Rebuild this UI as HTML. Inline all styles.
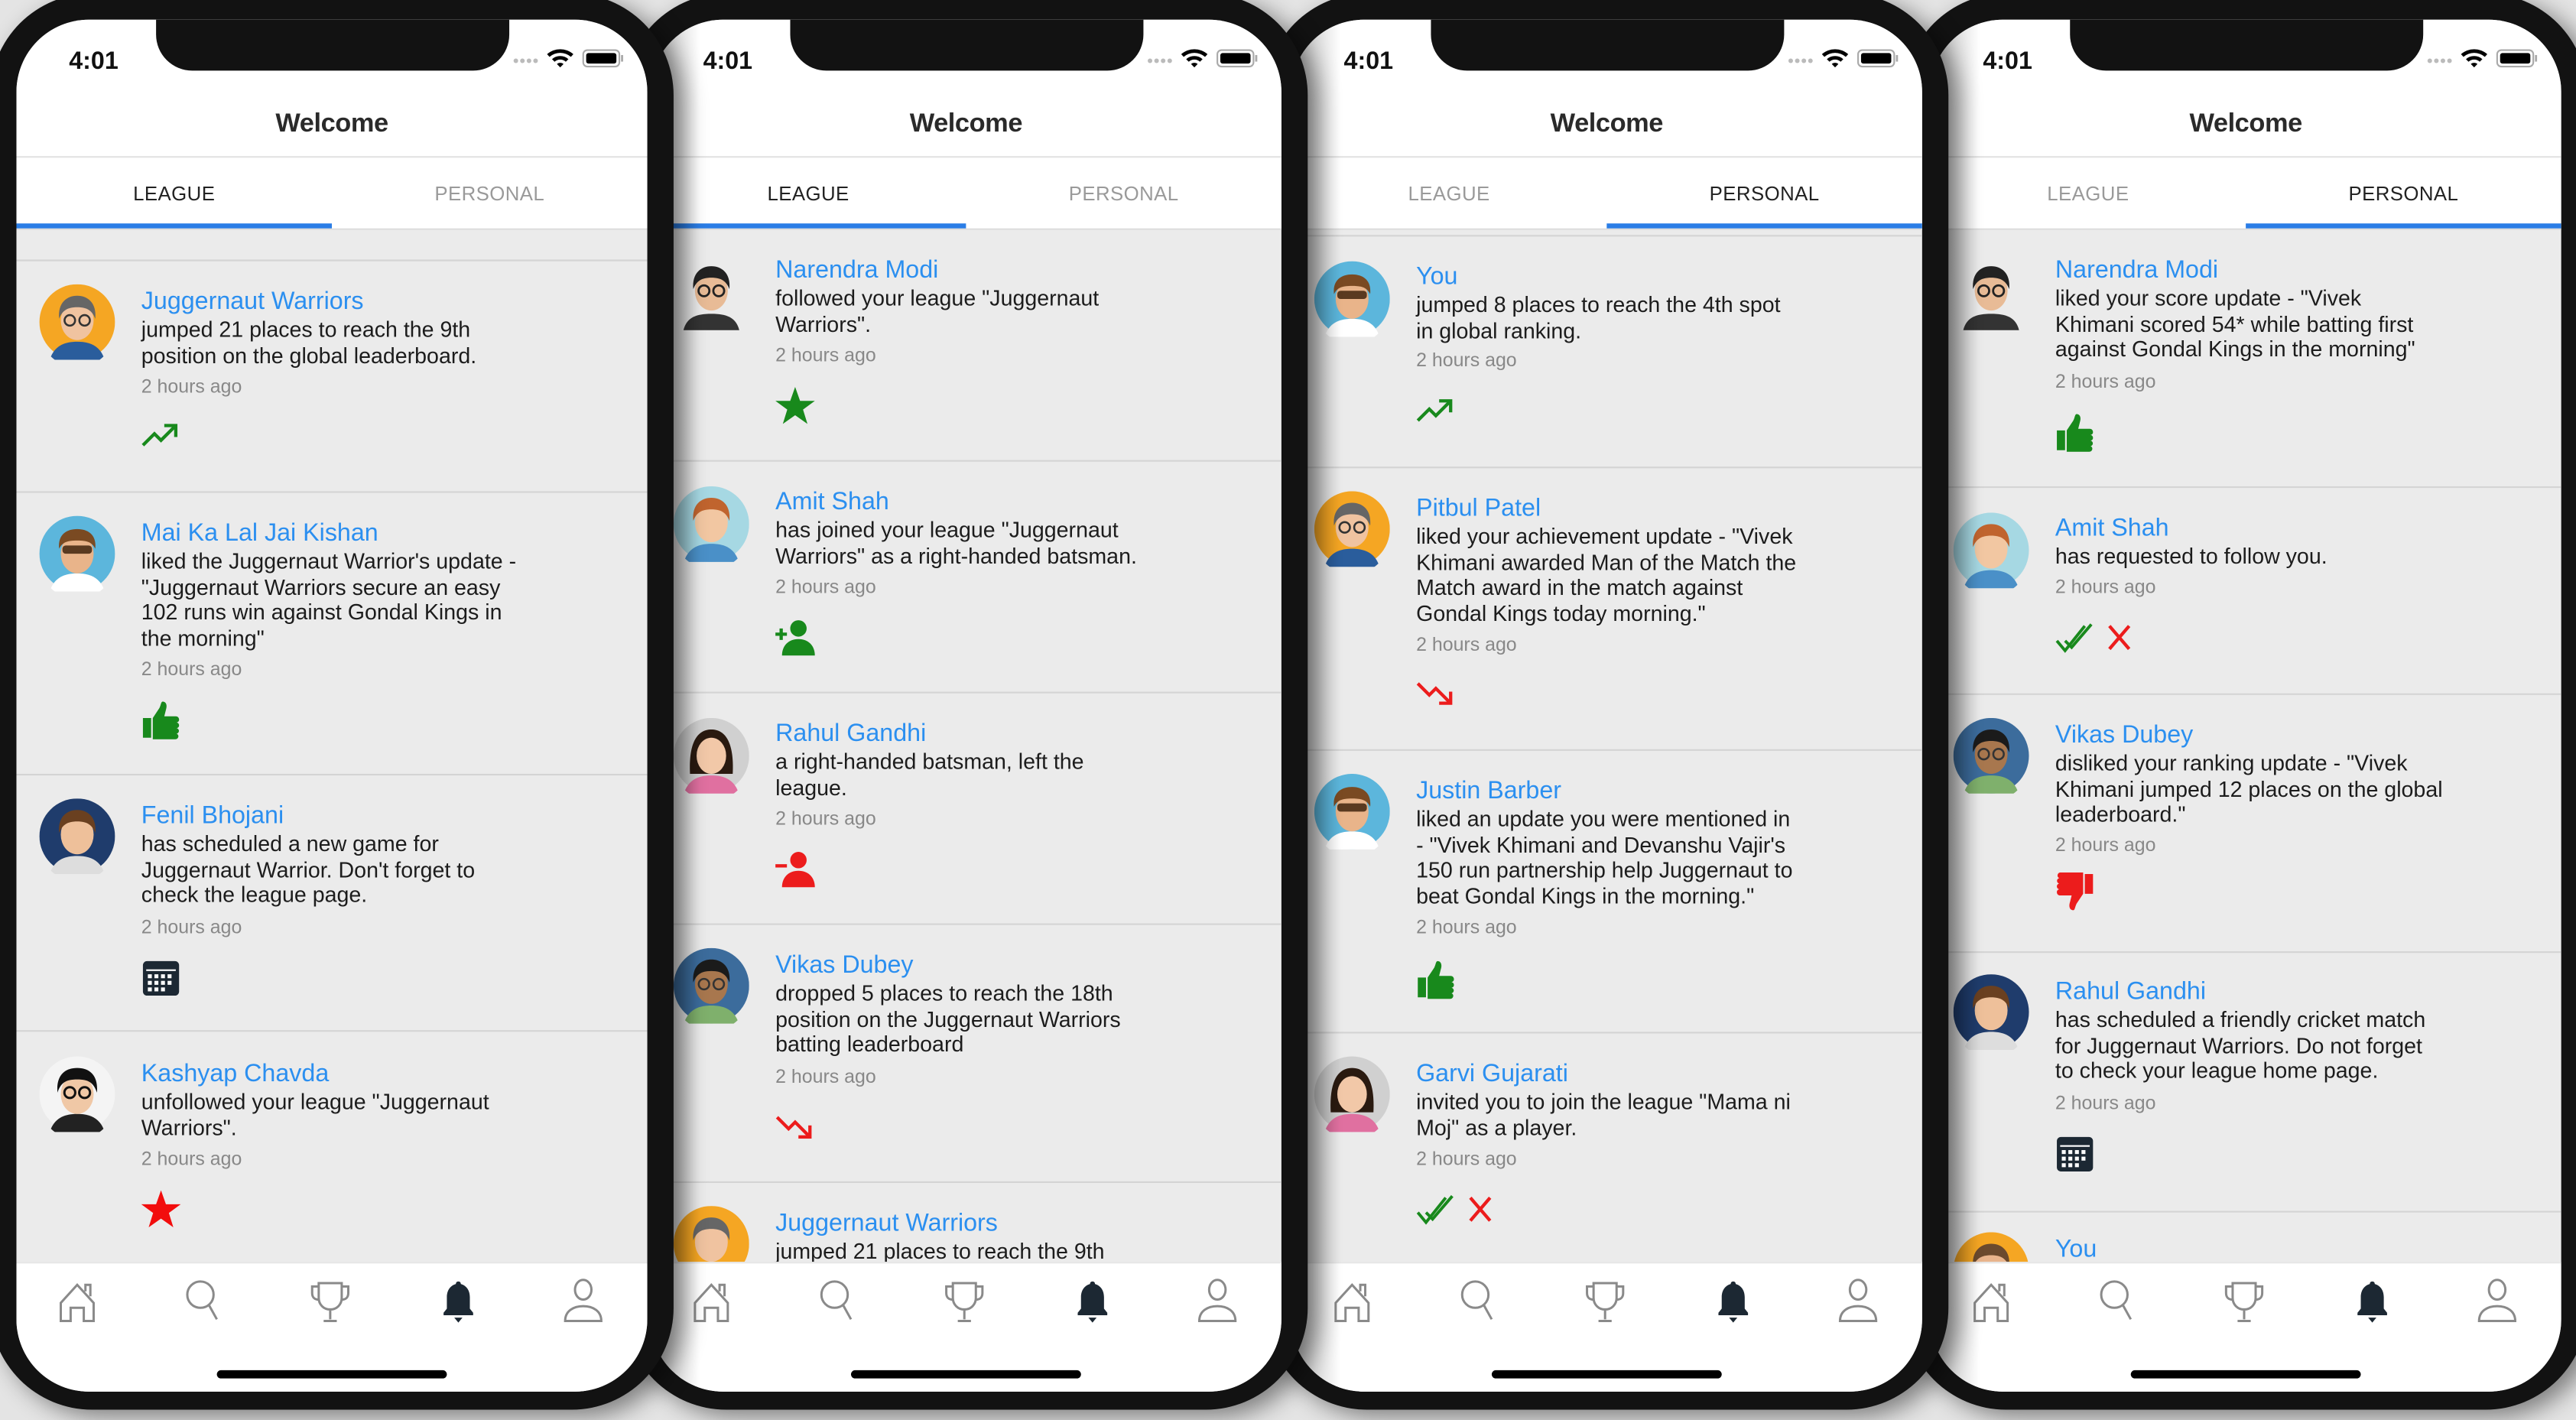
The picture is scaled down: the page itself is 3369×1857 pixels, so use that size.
<!DOCTYPE html>
<html><head><meta charset="utf-8">
<style>
html,body{margin:0;padding:0;}
body{width:3369px;height:1857px;overflow:hidden;background:#e4e4e4;font-family:"Liberation Sans",Arial,sans-serif;}
#w{position:absolute;left:0;top:0;width:1568px;height:864px;transform:scale(2.14860);transform-origin:0 0;}
.ph{position:absolute;top:-4px;width:416px;height:862px;background:#121212;border-radius:62px;box-shadow:6px 4px 14px rgba(0,0,0,.45);}
.sc{position:absolute;left:16px;top:16px;width:384px;height:835px;border-radius:44px;overflow:hidden;background:#ebebeb;}
.in{position:absolute;left:0;top:-12px;width:384px;height:864px;}
.hd{position:absolute;left:0;top:0;width:384px;height:140px;background:#fff;}
.notch{position:absolute;left:85px;top:0;width:215px;height:43px;background:#121212;border-radius:0 0 22px 22px;}
.time{position:absolute;left:32px;top:29px;font-size:15px;font-weight:bold;color:#111;}
.welc{position:absolute;left:0;width:384px;top:67px;text-align:center;font-size:16px;font-weight:bold;color:#2a2a2a;letter-spacing:-0.2px;}
.hl{position:absolute;left:0;top:95px;width:384px;height:1px;background:#e3e3e3;}
.tab{position:absolute;top:111px;width:192px;text-align:center;font-size:12px;color:#9a9a9a;letter-spacing:0.2px;}
.tab.a{color:#222;}
.ul{position:absolute;top:136px;width:192px;height:2.5px;background:#2a7de6;}
.tl{position:absolute;left:0;top:139px;width:384px;height:1px;background:#dcdcdc;}
.dv{position:absolute;left:0;width:384px;height:1px;background:#d4d4d4;}
.n{position:absolute;left:76px;font-size:15px;color:#2b8ff0;line-height:18px;white-space:nowrap;margin-top:2px;}
.b{position:absolute;left:76px;font-size:13.3px;color:#1c1c1c;line-height:15.7px;white-space:nowrap;margin-top:2px;}
.t{position:absolute;left:76px;font-size:11.6px;color:#888;line-height:14px;margin-top:2px;}
.av{position:absolute;left:14px;width:46px;height:46px;}
.ic{position:absolute;left:75px;}
.tb{position:absolute;left:0;top:768px;width:384px;height:96px;background:#fff;border-top:1px solid #e6e6e6;}
.ti{position:absolute;top:776px;}
.home{position:absolute;left:122px;top:834px;width:140px;height:4.5px;border-radius:3px;background:#000;}
.shd{position:absolute;left:0;top:0;width:30px;height:864px;background:linear-gradient(to right,rgba(0,0,0,.28),rgba(0,0,0,0));}
.stat{position:absolute;left:302px;top:28px;}
</style></head><body><div id="w">

<svg width="0" height="0" style="position:absolute">
<defs>
<symbol id="up" viewBox="0 0 26 24"><polyline points="2,18 9,11 13,15 22,6" fill="none" stroke="#18891c" stroke-width="2"/><polyline points="15,6 22,6 22,13" fill="none" stroke="#18891c" stroke-width="2"/></symbol>
<symbol id="dn" viewBox="0 0 26 24"><polyline points="2,6 9,13 13,9 22,18" fill="none" stroke="#ec1c1c" stroke-width="2"/><polyline points="15,18 22,18 22,11" fill="none" stroke="#ec1c1c" stroke-width="2"/></symbol>
<symbol id="star" viewBox="0 0 26 24"><polygon points="13,0.5 16,9 25,9 17.8,14.3 20.5,23 13,17.7 5.5,23 8.2,14.3 1,9 10,9"/></symbol>
<symbol id="thumb" viewBox="0 0 26 24"><path d="M2 11h5v12H2z M8 11l4-6c1-2 1-4 2-4 2 0 3 2 2 5l-1 4h7c1.3 0 2 1 2 2 0 1-.7 1.6-1.5 1.7 .9.2 1.5.9 1.5 1.8s-.7 1.6-1.5 1.7c.9.2 1.4.9 1.4 1.7s-.6 1.5-1.4 1.7c.7.2 1.1.8 1.1 1.5 0 1-.8 1.9-2 1.9H8z"/></symbol>
<symbol id="cal" viewBox="0 0 26 24"><rect x="2" y="2" width="22" height="21" rx="2.5" fill="#1c2833"/><rect x="4" y="7" width="18" height="1" fill="#fff"/><g fill="#fff"><rect x="5" y="10" width="2.4" height="2.4"/><rect x="9" y="10" width="2.4" height="2.4"/><rect x="13" y="10" width="2.4" height="2.4"/><rect x="17" y="10" width="2.4" height="2.4"/><rect x="5" y="14" width="2.4" height="2.4"/><rect x="9" y="14" width="2.4" height="2.4"/><rect x="13" y="14" width="2.4" height="2.4"/><rect x="17" y="14" width="2.4" height="2.4"/><rect x="5" y="18" width="2.4" height="2.4"/><rect x="9" y="18" width="2.4" height="2.4"/><rect x="13" y="18" width="2.4" height="2.4"/></g></symbol>
<symbol id="chk" viewBox="0 0 50 24"><g fill="none" stroke="#18891c" stroke-width="1.8"><polyline points="2,14 7,20 19,5"/><polyline points="7,14 11,18 23,4"/></g><g stroke="#ec1c1c" stroke-width="2"><line x1="34" y1="5" x2="46" y2="19"/><line x1="46" y1="5" x2="34" y2="19"/></g></symbol>
<symbol id="tabs" viewBox="0 0 384 30"><g fill="none" stroke="#8a8a8a" stroke-width="1.4"><path d="M27 28V17l10-11 10 11v11h-6v-8h-8v8z M42 10V6h3v7"/><circle cx="112" cy="12" r="8"/><line x1="117" y1="18" x2="122" y2="27"/><path d="M184 5h14v9c0 4-3 7-7 7s-7-3-7-7z M184 7h-4v4c0 3 2 4 4 4 M198 7h4v4c0 3-2 4-4 4 M191 21v6 M187 28h8"/><ellipse cx="345" cy="9" rx="5" ry="6"/><path d="M334 28c0-6 5-9 11-9s11 3 11 9z"/></g><path d="M269 4c-1 0-1.5.6-1.5 1.5-3.5 1-5.5 4-5.5 8v7l-2 2.5v1.5h18v-1.5l-2-2.5v-7c0-4-2-7-5.5-8 0-.9-.5-1.5-1.5-1.5z M266.5 26h5l-2.5 3z" fill="#1c2833"/></symbol>
<symbol id="stat" viewBox="0 0 80 14"><g fill="#bbb"><circle cx="2" cy="9" r="1.4"/><circle cx="6" cy="9" r="1.4"/><circle cx="10" cy="9" r="1.4"/><circle cx="14" cy="9" r="1.4"/></g><path d="M21 5a12 12 0 0 1 16 0l-1.5 1.6a10 10 0 0 0-13 0z M24 8a7.5 7.5 0 0 1 10 0l-1.6 1.6a5 5 0 0 0-6.8 0z M27 11a3 3 0 0 1 4 0l-2 2z" fill="#000"/><rect x="43" y="2.5" width="22" height="10" rx="2.5" fill="none" stroke="#aaa" stroke-width="1"/><rect x="44.8" y="4.3" width="18.4" height="6.4" rx="1.4" fill="#000"/><rect x="66" y="5.5" width="1.3" height="4" fill="#aaa"/></symbol>
</defs></svg>

<!-- PHONE 4 -->
<div class="ph" style="left:1159px;z-index:1"><div class="sc"><div class="in">
<div class="hd"></div><div class="notch"></div><div class="time">4:01</div><svg class="stat" width="80" height="14"><use href="#stat"/></svg>
<div class="welc">Welcome</div><div class="hl"></div>
<div class="tab" style="left:0">LEAGUE</div><div class="tab a" style="left:192px">PERSONAL</div><div class="tl"></div><div class="ul" style="left:192px"></div>

<svg class="av" style="top:155px" viewBox="0 0 46 46"><path d="M6 46c2-8 8-10 17-10s15 2 17 10z" fill="#333"/><ellipse cx="23" cy="22" rx="10" ry="12" fill="#e8bb96"/><path d="M12 21c-1-10 5-14 11-14s12 4 11 14c-2-5-5-7-11-7s-9 2-11 7z" fill="#222"/><g fill="none" stroke="#222" stroke-width="1.3"><circle cx="18.5" cy="22" r="3.3"/><circle cx="27.5" cy="22" r="3.3"/></g></svg>
<div class="n" style="top:154px">Narendra Modi</div>
<div class="b" style="top:172px">liked your score update - "Vivek<br>Khimani scored 54* while batting first<br>against Gondal Kings in the morning"</div>
<div class="t" style="top:224px">2 hours ago</div>
<svg class="ic" style="top:251px;fill:#18891c" width="26" height="24"><use href="#thumb"/></svg>
<div class="dv" style="top:296px"></div>

<svg class="av" style="top:312px" viewBox="0 0 46 46"><circle cx="23" cy="23" r="23" fill="#a6d8e3"/><path d="M7 44c3-7 9-9 16-9s13 2 16 9a23 23 0 0 1-32 0z" fill="#4a90c8"/><ellipse cx="23" cy="22" rx="10" ry="12" fill="#f2c7a2"/><path d="M12 21c-1-10 5-14 11-14s12 4 11 14c-2-5-5-7-11-7s-9 2-11 7z" fill="#c0642e"/></svg>
<div class="n" style="top:311px">Amit Shah</div>
<div class="b" style="top:329px">has requested to follow you.</div>
<div class="t" style="top:349px">2 hours ago</div>
<svg class="ic" style="top:376px" width="50" height="24"><use href="#chk"/></svg>
<div class="dv" style="top:422px"></div>

<svg class="av" style="top:437px" viewBox="0 0 46 46"><circle cx="23" cy="23" r="23" fill="#3c6c9c"/><path d="M7 44c3-7 9-9 16-9s13 2 16 9a23 23 0 0 1-32 0z" fill="#7fb06c"/><ellipse cx="23" cy="22" rx="10" ry="12" fill="#a8774e"/><path d="M12 21c-1-10 5-14 11-14s12 4 11 14c-2-5-5-7-11-7s-9 2-11 7z" fill="#1b1b1b"/><g fill="none" stroke="#333" stroke-width="1.2"><circle cx="18.5" cy="22" r="3.2"/><circle cx="27.5" cy="22" r="3.2"/></g></svg>
<div class="n" style="top:437px">Vikas Dubey</div>
<div class="b" style="top:455px">disliked your ranking update - "Vivek<br>Khimani jumped 12 places on the global<br>leaderboard."</div>
<div class="t" style="top:506px">2 hours ago</div>
<svg class="ic" style="top:531px;fill:#ec1c1c" width="26" height="24"><g transform="rotate(180 13 12)"><use href="#thumb"/></g></svg>
<div class="dv" style="top:579px"></div>

<svg class="av" style="top:593px" viewBox="0 0 46 46"><circle cx="23" cy="23" r="23" fill="#1f3c6c"/><path d="M7 44c3-7 9-9 16-9s13 2 16 9a23 23 0 0 1-32 0z" fill="#ddd"/><ellipse cx="23" cy="22" rx="10" ry="12" fill="#eec09a"/><path d="M12 21c-1-10 5-14 11-14s12 4 11 14c-2-5-5-7-11-7s-9 2-11 7z" fill="#6a4020"/></svg>
<div class="n" style="top:593px">Rahul Gandhi</div>
<div class="b" style="top:611px">has scheduled a friendly cricket match<br>for Juggernaut Warriors. Do not forget<br>to check your league home page.</div>
<div class="t" style="top:663px">2 hours ago</div>
<svg class="ic" style="top:690px" width="26" height="24"><use href="#cal"/></svg>
<div class="dv" style="top:737px"></div>
<svg class="av" style="top:750px" viewBox="0 0 46 46"><circle cx="23" cy="23" r="23" fill="#f5a623"/><ellipse cx="23" cy="22" rx="10" ry="12" fill="#e8b48c"/><path d="M12 21c-1-10 5-14 11-14s12 4 11 14c-2-5-5-7-11-7s-9 2-11 7z" fill="#6b4a2e"/></svg>
<div class="n" style="top:750px">You</div>

<div class="tb"></div><svg class="ti" style="left:0" width="384" height="30"><use href="#tabs"/></svg><div class="home"></div>
<div class="shd"></div>
</div></div></div>

<!-- PHONE 3 -->
<div class="ph" style="left:770px;z-index:2"><div class="sc"><div class="in">
<div class="hd"></div><div class="notch"></div><div class="time">4:01</div><svg class="stat" width="80" height="14"><use href="#stat"/></svg>
<div class="welc">Welcome</div><div class="hl"></div>
<div class="tab" style="left:0">LEAGUE</div><div class="tab a" style="left:192px">PERSONAL</div><div class="tl"></div><div class="ul" style="left:192px"></div>
<div class="dv" style="top:143px"></div>

<svg class="av" style="top:159px" viewBox="0 0 46 46"><circle cx="23" cy="23" r="23" fill="#5cb6dc"/><path d="M7 44c3-7 9-9 16-9s13 2 16 9a23 23 0 0 1-32 0z" fill="#fff"/><ellipse cx="23" cy="23" rx="10" ry="12" fill="#e9b48a"/><path d="M12 20c-1-9 5-12 11-12s12 3 11 12c-2-4-5-5-11-5s-9 1-11 5z" fill="#7a4a22"/><rect x="14" y="18" width="18" height="5" rx="2" fill="#5a3a20"/></svg>
<div class="n" style="top:158px">You</div>
<div class="b" style="top:176px">jumped 8 places to reach the 4th spot<br>in global ranking.</div>
<div class="t" style="top:211px">2 hours ago</div>
<svg class="ic" style="top:238px" width="26" height="24"><use href="#up"/></svg>
<div class="dv" style="top:284px"></div>

<svg class="av" style="top:299px" viewBox="0 0 46 46"><circle cx="23" cy="23" r="23" fill="#f5a623"/><path d="M7 44c3-7 9-9 16-9s13 2 16 9a23 23 0 0 1-32 0z" fill="#2a5d9c"/><ellipse cx="23" cy="22" rx="10" ry="12" fill="#f0c3a0"/><path d="M12 21c-1-10 5-14 11-14s12 4 11 14c-2-5-5-7-11-7s-9 2-11 7z" fill="#666"/><g fill="none" stroke="#333" stroke-width="1.2"><circle cx="18.5" cy="22" r="3.2"/><circle cx="27.5" cy="22" r="3.2"/></g></svg>
<div class="n" style="top:299px">Pitbul Patel</div>
<div class="b" style="top:317px">liked your achievement update - "Vivek<br>Khimani awarded Man of the Match the<br>Match award in the match against<br>Gondal Kings today morning."</div>
<div class="t" style="top:384px">2 hours ago</div>
<svg class="ic" style="top:410px" width="26" height="24"><use href="#dn"/></svg>
<div class="dv" style="top:456px"></div>

<svg class="av" style="top:471px" viewBox="0 0 46 46"><circle cx="23" cy="23" r="23" fill="#5cb6dc"/><path d="M7 44c3-7 9-9 16-9s13 2 16 9a23 23 0 0 1-32 0z" fill="#fff"/><ellipse cx="23" cy="23" rx="10" ry="12" fill="#e9b48a"/><path d="M12 20c-1-9 5-12 11-12s12 3 11 12c-2-4-5-5-11-5s-9 1-11 5z" fill="#7a4a22"/><rect x="14" y="18" width="18" height="5" rx="2" fill="#5a3a20"/></svg>
<div class="n" style="top:471px">Justin Barber</div>
<div class="b" style="top:489px">liked an update you were mentioned in<br>- "Vivek Khimani and Devanshu Vajir's<br>150 run partnership help Juggernaut to<br>beat Gondal Kings in the morning."</div>
<div class="t" style="top:556px">2 hours ago</div>
<svg class="ic" style="top:584px;fill:#18891c" width="26" height="24"><use href="#thumb"/></svg>
<div class="dv" style="top:628px"></div>

<svg class="av" style="top:643px" viewBox="0 0 46 46"><circle cx="23" cy="23" r="23" fill="#d0d0d0"/><path d="M7 44c3-7 9-9 16-9s13 2 16 9a23 23 0 0 1-32 0z" fill="#e070a0"/><path d="M10 34c-1-20 5-27 13-27s14 7 13 27z" fill="#2a1a10"/><ellipse cx="23" cy="23" rx="9" ry="11" fill="#f2c8a8"/></svg>
<div class="n" style="top:643px">Garvi Gujarati</div>
<div class="b" style="top:661px">invited you to join the league "Mama ni<br>Moj" as a player.</div>
<div class="t" style="top:697px">2 hours ago</div>
<svg class="ic" style="top:724px" width="50" height="24"><use href="#chk"/></svg>

<div class="tb"></div><svg class="ti" style="left:0" width="384" height="30"><use href="#tabs"/></svg><div class="home"></div>
<div class="shd"></div>
</div></div></div>

<!-- PHONE 2 -->
<div class="ph" style="left:380px;z-index:3"><div class="sc"><div class="in">
<div class="hd"></div><div class="notch"></div><div class="time">4:01</div><svg class="stat" width="80" height="14"><use href="#stat"/></svg>
<div class="welc">Welcome</div><div class="hl"></div>
<div class="tab a" style="left:0">LEAGUE</div><div class="tab" style="left:192px">PERSONAL</div><div class="tl"></div><div class="ul" style="left:0"></div>

<svg class="av" style="top:155px" viewBox="0 0 46 46"><path d="M6 46c2-8 8-10 17-10s15 2 17 10z" fill="#333"/><ellipse cx="23" cy="22" rx="10" ry="12" fill="#e8bb96"/><path d="M12 21c-1-10 5-14 11-14s12 4 11 14c-2-5-5-7-11-7s-9 2-11 7z" fill="#222"/><g fill="none" stroke="#222" stroke-width="1.3"><circle cx="18.5" cy="22" r="3.3"/><circle cx="27.5" cy="22" r="3.3"/></g></svg>
<div class="n" style="top:154px">Narendra Modi</div>
<div class="b" style="top:172px">followed your league "Juggernaut<br>Warriors".</div>
<div class="t" style="top:208px">2 hours ago</div>
<svg class="ic" style="top:235px;fill:#18891c" width="26" height="24"><use href="#star"/></svg>
<div class="dv" style="top:280px"></div>

<svg class="av" style="top:296px" viewBox="0 0 46 46"><circle cx="23" cy="23" r="23" fill="#a6d8e3"/><path d="M7 44c3-7 9-9 16-9s13 2 16 9a23 23 0 0 1-32 0z" fill="#4a90c8"/><ellipse cx="23" cy="22" rx="10" ry="12" fill="#f2c7a2"/><path d="M12 21c-1-10 5-14 11-14s12 4 11 14c-2-5-5-7-11-7s-9 2-11 7z" fill="#c0642e"/></svg>
<div class="n" style="top:295px">Amit Shah</div>
<div class="b" style="top:313px">has joined your league "Juggernaut<br>Warriors" as a right-handed batsman.</div>
<div class="t" style="top:349px">2 hours ago</div>
<svg class="ic" style="top:376px" width="26" height="24" viewBox="0 0 26 24"><circle cx="15" cy="6.5" r="5" fill="#18891c"/><path d="M5 23c0-6 4-10 10-10s10 4 10 10z" fill="#18891c"/><path d="M1 10h7M4.5 6.5v7" stroke="#18891c" stroke-width="2"/></svg>
<div class="dv" style="top:421px"></div>

<svg class="av" style="top:437px" viewBox="0 0 46 46"><circle cx="23" cy="23" r="23" fill="#d0d0d0"/><path d="M7 44c3-7 9-9 16-9s13 2 16 9a23 23 0 0 1-32 0z" fill="#e070a0"/><path d="M10 34c-1-20 5-27 13-27s14 7 13 27z" fill="#2a1a10"/><ellipse cx="23" cy="23" rx="9" ry="11" fill="#f2c8a8"/></svg>
<div class="n" style="top:436px">Rahul Gandhi</div>
<div class="b" style="top:454px">a right-handed batsman, left the<br>league.</div>
<div class="t" style="top:490px">2 hours ago</div>
<svg class="ic" style="top:517px" width="26" height="24" viewBox="0 0 26 24"><circle cx="15" cy="6.5" r="5" fill="#ec1c1c"/><path d="M5 23c0-6 4-10 10-10s10 4 10 10z" fill="#ec1c1c"/><path d="M1 10h7" stroke="#ec1c1c" stroke-width="2"/></svg>
<div class="dv" style="top:562px"></div>

<svg class="av" style="top:577px" viewBox="0 0 46 46"><circle cx="23" cy="23" r="23" fill="#3c6c9c"/><path d="M7 44c3-7 9-9 16-9s13 2 16 9a23 23 0 0 1-32 0z" fill="#7fb06c"/><ellipse cx="23" cy="22" rx="10" ry="12" fill="#a8774e"/><path d="M12 21c-1-10 5-14 11-14s12 4 11 14c-2-5-5-7-11-7s-9 2-11 7z" fill="#1b1b1b"/><g fill="none" stroke="#333" stroke-width="1.2"><circle cx="18.5" cy="22" r="3.2"/><circle cx="27.5" cy="22" r="3.2"/></g></svg>
<div class="n" style="top:577px">Vikas Dubey</div>
<div class="b" style="top:595px">dropped 5 places to reach the 18th<br>position on the Juggernaut Warriors<br>batting leaderboard</div>
<div class="t" style="top:647px">2 hours ago</div>
<svg class="ic" style="top:674px" width="26" height="24"><use href="#dn"/></svg>
<div class="dv" style="top:719px"></div>

<svg class="av" style="top:734px" viewBox="0 0 46 46"><circle cx="23" cy="23" r="23" fill="#f5a623"/><ellipse cx="23" cy="22" rx="10" ry="12" fill="#f0c3a0"/><path d="M12 21c-1-10 5-14 11-14s12 4 11 14c-2-5-5-7-11-7s-9 2-11 7z" fill="#666"/></svg>
<div class="n" style="top:734px">Juggernaut Warriors</div>
<div class="b" style="top:752px">jumped 21 places to reach the 9th</div>

<div class="tb"></div><svg class="ti" style="left:0" width="384" height="30"><use href="#tabs"/></svg><div class="home"></div>
<div class="shd"></div>
</div></div></div>

<!-- PHONE 1 -->
<div class="ph" style="left:-6px;z-index:4"><div class="sc"><div class="in">
<div class="hd"></div><div class="notch"></div><div class="time">4:01</div><svg class="stat" width="80" height="14"><use href="#stat"/></svg>
<div class="welc">Welcome</div><div class="hl"></div>
<div class="tab a" style="left:0">LEAGUE</div><div class="tab" style="left:192px">PERSONAL</div><div class="tl"></div><div class="ul" style="left:0"></div>
<div class="dv" style="top:158px"></div>

<svg class="av" style="top:173px" viewBox="0 0 46 46"><circle cx="23" cy="23" r="23" fill="#f5a623"/><path d="M7 44c3-7 9-9 16-9s13 2 16 9a23 23 0 0 1-32 0z" fill="#2a5d9c"/><ellipse cx="23" cy="22" rx="10" ry="12" fill="#f0c3a0"/><path d="M12 21c-1-10 5-14 11-14s12 4 11 14c-2-5-5-7-11-7s-9 2-11 7z" fill="#666"/><g fill="none" stroke="#333" stroke-width="1.2"><circle cx="18.5" cy="22" r="3.2"/><circle cx="27.5" cy="22" r="3.2"/></g></svg>
<div class="n" style="top:173px">Juggernaut Warriors</div>
<div class="b" style="top:191px">jumped 21 places to reach the 9th<br>position on the global leaderboard.</div>
<div class="t" style="top:227px">2 hours ago</div>
<svg class="ic" style="top:253px" width="26" height="24"><use href="#up"/></svg>
<div class="dv" style="top:299px"></div>

<svg class="av" style="top:314px" viewBox="0 0 46 46"><circle cx="23" cy="23" r="23" fill="#5cb6dc"/><path d="M7 44c3-7 9-9 16-9s13 2 16 9a23 23 0 0 1-32 0z" fill="#fff"/><ellipse cx="23" cy="23" rx="10" ry="12" fill="#e9b48a"/><path d="M12 20c-1-9 5-12 11-12s12 3 11 12c-2-4-5-5-11-5s-9 1-11 5z" fill="#7a4a22"/><rect x="14" y="18" width="18" height="5" rx="2" fill="#5a3a20"/></svg>
<div class="n" style="top:314px">Mai Ka Lal Jai Kishan</div>
<div class="b" style="top:332px">liked the Juggernaut Warrior's update -<br>"Juggernaut Warriors secure an easy<br>102 runs win against Gondal Kings in<br>the morning"</div>
<div class="t" style="top:399px">2 hours ago</div>
<svg class="ic" style="top:426px;fill:#18891c" width="26" height="24"><use href="#thumb"/></svg>
<div class="dv" style="top:471px"></div>

<svg class="av" style="top:486px" viewBox="0 0 46 46"><circle cx="23" cy="23" r="23" fill="#1f3c6c"/><path d="M7 44c3-7 9-9 16-9s13 2 16 9a23 23 0 0 1-32 0z" fill="#ddd"/><ellipse cx="23" cy="22" rx="10" ry="12" fill="#eec09a"/><path d="M12 21c-1-10 5-14 11-14s12 4 11 14c-2-5-5-7-11-7s-9 2-11 7z" fill="#6a4020"/></svg>
<div class="n" style="top:486px">Fenil Bhojani</div>
<div class="b" style="top:504px">has scheduled a new game for<br>Juggernaut Warrior. Don't forget to<br>check the league page.</div>
<div class="t" style="top:556px">2 hours ago</div>
<svg class="ic" style="top:583px" width="26" height="24"><use href="#cal"/></svg>
<div class="dv" style="top:627px"></div>

<svg class="av" style="top:643px" viewBox="0 0 46 46"><circle cx="23" cy="23" r="23" fill="#f4f4f4"/><path d="M7 44c3-7 9-9 16-9s13 2 16 9a23 23 0 0 1-32 0z" fill="#222"/><ellipse cx="23" cy="23" rx="10" ry="12" fill="#f0c8a6"/><path d="M11 22c-1-11 5-15 12-15s13 4 12 15c-2-6-5-8-12-8s-10 2-12 8z" fill="#111"/><g fill="none" stroke="#111" stroke-width="1.4"><circle cx="18.5" cy="22" r="3.3"/><circle cx="27.5" cy="22" r="3.3"/></g></svg>
<div class="n" style="top:643px">Kashyap Chavda</div>
<div class="b" style="top:661px">unfollowed your league "Juggernaut<br>Warriors".</div>
<div class="t" style="top:697px">2 hours ago</div>
<svg class="ic" style="top:724px;fill:#f20d0d" width="26" height="24"><use href="#star"/></svg>

<div class="tb"></div><svg class="ti" style="left:0" width="384" height="30"><use href="#tabs"/></svg><div class="home"></div>
</div></div></div>

</div></body></html>
